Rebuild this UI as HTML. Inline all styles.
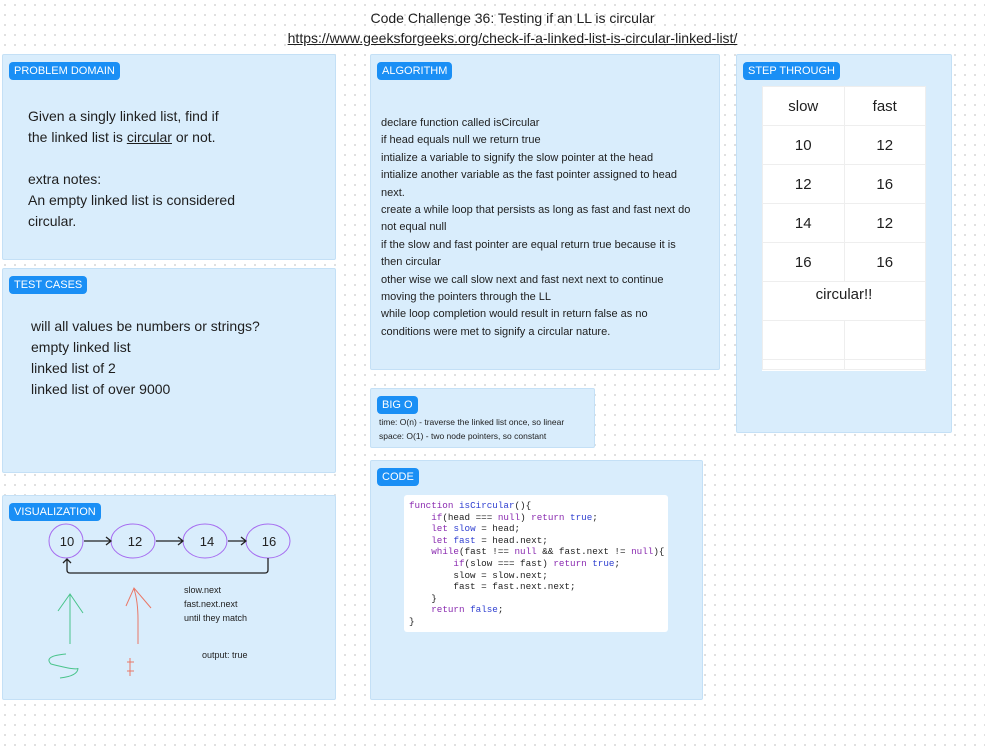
<!DOCTYPE html>
<html><head><meta charset="utf-8"><style>
*{margin:0;padding:0;box-sizing:border-box}
body{width:985px;height:746px;position:relative;overflow:hidden;font-family:"Liberation Sans",sans-serif;color:#1e1e1e;background-color:#fff;background-image:radial-gradient(circle,#d6d6d6 0.8px,transparent 1px);background-size:10px 10px}
.p{position:absolute;background:#d9edfc;border:1px solid #c4e0f6;border-radius:2px}
.b{position:absolute;left:6px;top:7px;background:#1a8ff5;color:#fff;font-size:11px;padding:3px 5px;border-radius:4px;line-height:12px}
.t{position:absolute;font-size:14px;line-height:21px}
.s{position:absolute;font-size:11px;line-height:17.4px;white-space:nowrap}
pre{font-family:"Liberation Mono",monospace;font-size:9.25px;line-height:11.6px;color:#222}
.k{color:#8a2bb0}.v{color:#2f3fd0}
table{border-collapse:collapse;width:100%}
td{border:1px solid #eee;text-align:center;font-size:15px;width:50%;height:39px;padding:0}
</style></head><body>
<div style="position:absolute;left:0;width:1025px;top:8px;text-align:center;font-size:14px;line-height:20px">Code Challenge 36: Testing if an LL is circular<br><u>https://www.geeksforgeeks.org/check-if-a-linked-list-is-circular-linked-list/</u></div>

<div class="p" style="left:2px;top:54px;width:334px;height:206px"><div class="b">PROBLEM DOMAIN</div>
<div class="t" style="left:25px;top:51px">Given a singly linked list, find if<br>the linked list is <u>circular</u> or not.<br><br>extra notes:<br>An empty linked list is considered<br>circular.</div></div>

<div class="p" style="left:2px;top:268px;width:334px;height:205px"><div class="b">TEST CASES</div>
<div class="t" style="left:28px;top:47px">will all values be numbers or strings?<br>empty linked list<br>linked list of 2<br>linked list of over 9000</div></div>

<div class="p" style="left:2px;top:495px;width:334px;height:205px"><div class="b">VISUALIZATION</div>
<svg style="position:absolute;left:0;top:0" width="334" height="205">
<g fill="none" stroke="#a66cf0" stroke-width="1"><ellipse cx="63" cy="45" rx="17" ry="17"/><ellipse cx="130" cy="45" rx="22" ry="17"/><ellipse cx="202" cy="45" rx="22" ry="17"/><ellipse cx="265" cy="45" rx="22" ry="17"/></g>
<g fill="none" stroke="#222" stroke-width="1.3"><path d="M81 45H108M103 41L108 45 103 49"/><path d="M153 45H180M175 41L180 45 175 49"/><path d="M225 45H243M238 41L243 45 238 49"/><path d="M265 62V74Q265 77 262 77H67Q64 77 64 74V63M60 67L64 63 68 67"/></g>
<g fill="none" stroke="#49c48b" stroke-width="1"><path d="M67 148V99M55 115L67 98 80 117"/><path d="M63 158Q40 160 48 168Q75 175 75 172Q75 180 57 182"/></g>
<g fill="none" stroke="#e97766" stroke-width="1"><path d="M135 148V124Q135 105 131 93M123 110L131 92 148 112"/><path d="M127 162V180M124 166H131M124 175H131"/></g>
<text font-size="9" x="181" y="97" fill="#222">slow.next</text><text font-size="9" x="181" y="111" fill="#222">fast.next.next</text><text font-size="9" x="181" y="125" fill="#222">until they match</text><text font-size="9" x="199" y="162" fill="#222">output: true</text>
<g font-size="13" text-anchor="middle" fill="#222"><text x="64" y="50">10</text><text x="132" y="50">12</text><text x="204" y="50">14</text><text x="266" y="50">16</text></g>
</svg></div>

<div class="p" style="left:370px;top:54px;width:350px;height:316px"><div class="b">ALGORITHM</div>
<div class="s" style="left:10px;top:60px">declare function called isCircular<br>if head equals null we return true<br>intialize a variable to signify the slow pointer at the head<br>intialize another variable as the fast pointer assigned to head<br>next.<br>create a while loop that persists as long as fast and fast next do<br>not equal null<br>if the slow and fast pointer are equal return true because it is<br>then circular<br>other wise we call slow next and fast next next to continue<br>moving the pointers through the LL<br>while loop completion would result in return false as no<br>conditions were met to signify a circular nature.</div></div>

<div class="p" style="left:370px;top:388px;width:225px;height:60px"><div class="b">BIG O</div>
<div style="position:absolute;left:8px;top:27px;font-size:8.5px;line-height:13.5px">time: O(n) - traverse the linked list once, so linear<br>space: O(1) - two node pointers, so constant</div></div>

<div class="p" style="left:370px;top:460px;width:333px;height:240px"><div class="b">CODE</div>
<div style="position:absolute;left:33px;top:34px;width:264px;height:137px;background:#fff;border-radius:3px;padding:5px 5px">
<pre><span class="k">function</span> <span class="v">isCircular</span>(){
    <span class="k">if</span>(head === <span class="k">null</span>) <span class="k">return</span> <span class="v">true</span>;
    <span class="k">let</span> <span class="v">slow</span> = head;
    <span class="k">let</span> <span class="v">fast</span> = head.next;
    <span class="k">while</span>(fast !== <span class="k">null</span> &amp;&amp; fast.next != <span class="k">null</span>){
        <span class="k">if</span>(slow === fast) <span class="k">return</span> <span class="v">true</span>;
        slow = slow.next;
        fast = fast.next.next;
    }
    <span class="k">return</span> <span class="v">false</span>;
}</pre></div></div>

<div class="p" style="left:736px;top:54px;width:216px;height:379px"><div class="b">STEP THROUGH</div>
<div style="position:absolute;left:25px;top:31px;width:164px;height:285px;background:#fff;overflow:hidden">
<table><tr><td>slow</td><td>fast</td></tr><tr><td>10</td><td>12</td></tr><tr><td>12</td><td>16</td></tr><tr><td>14</td><td>12</td></tr><tr><td>16</td><td>16</td></tr><tr><td colspan="2" style="vertical-align:top;padding-top:4px">circular!!</td></tr><tr><td></td><td></td></tr><tr><td style="height:10px"></td><td style="height:10px"></td></tr></table></div></div>
</body></html>
